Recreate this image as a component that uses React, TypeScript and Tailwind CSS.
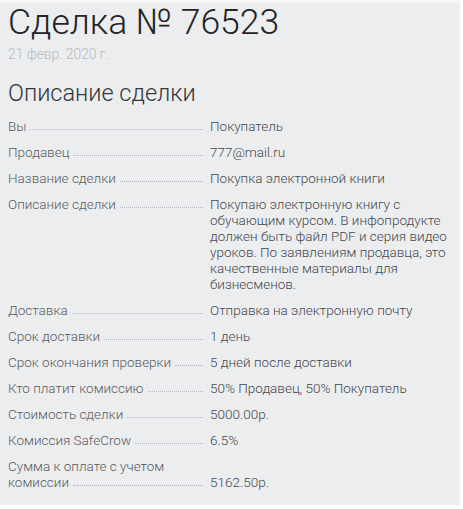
import React from "react";

const rows: { label: string; value: React.ReactNode; end?: boolean }[] = [
  { label: "Вы", value: "Покупатель" },
  { label: "Продавец", value: "777@mail.ru" },
  { label: "Название сделки", value: "Покупка электронной книги" },
  {
    label: "Описание сделки",
    value:
      "Покупаю электронную книгу с обучающим курсом. В инфопродукте должен быть файл PDF и серия видео уроков. По заявлениям продавца, это качественные материалы для бизнесменов.",
  },
  { label: "Доставка", value: "Отправка на электронную почту" },
  { label: "Срок доставки", value: "1 день" },
  { label: "Срок окончания проверки", value: "5 дней после доставки" },
  { label: "Кто платит комиссию", value: "50% Продавец, 50% Покупатель" },
  { label: "Стоимость сделки", value: "5000.00р." },
  { label: "Комиссия SafeCrow", value: "6.5%" },
  { label: "Сумма к оплате с учетом комиссии", value: "5162.50р.", end: true },
];

function Row({ label, value, end }: { label: string; value: React.ReactNode; end?: boolean }) {
  return (
    <div className={`flex ${end ? "items-end" : "items-start"}`}>
      <div className="w-[195px] shrink-0 text-[#575b61]">
        {end ? (
          <div className="flex flex-col">
            <span>Сумма к оплате с учетом</span>
            <div className="flex items-end">
              <span className="whitespace-nowrap pr-1">комиссии</span>
              <span className="flex-1 mb-[4px] border-b border-dotted border-[#b0b4ba]" />
            </div>
          </div>
        ) : (
          <div className="flex items-end h-4">
            <span className="whitespace-nowrap pr-1">{label}</span>
            <span className="flex-1 mb-[4px] border-b border-dotted border-[#b0b4ba]" />
          </div>
        )}
      </div>
      <div className="ml-[7px] w-[246px] text-[#44484e]">{value}</div>
    </div>
  );
}

export default function App() {
  return (
    <div className="w-[463px] h-[509px] bg-white">
      <div
        className="w-[460px] h-[505px] bg-[#ecedef] shadow-[inset_0_4px_3px_-2px_#fbfbfb] pl-2 pt-[2px]"
        style={{ fontFamily: "Roboto, 'Liberation Sans', sans-serif" }}
      >
        <h1 className="text-[35.5px] leading-[40px] font-light text-[#222428]">
          Сделка № 76523
        </h1>
        <div className="mt-[4px] text-[13.8px] leading-4 font-light text-[#b5b9bf]">21 февр. 2020 г.</div>
        <h2 className="mt-[17px] text-[23.5px] leading-[28px] font-light text-[#33373c]">Описание сделки</h2>
        <div className="mt-[11px] flex flex-col gap-[10px] text-[13.5px] leading-4 font-light">
          {rows.map((r) => (
            <Row key={r.label} {...r} />
          ))}
        </div>
      </div>
    </div>
  );
}
